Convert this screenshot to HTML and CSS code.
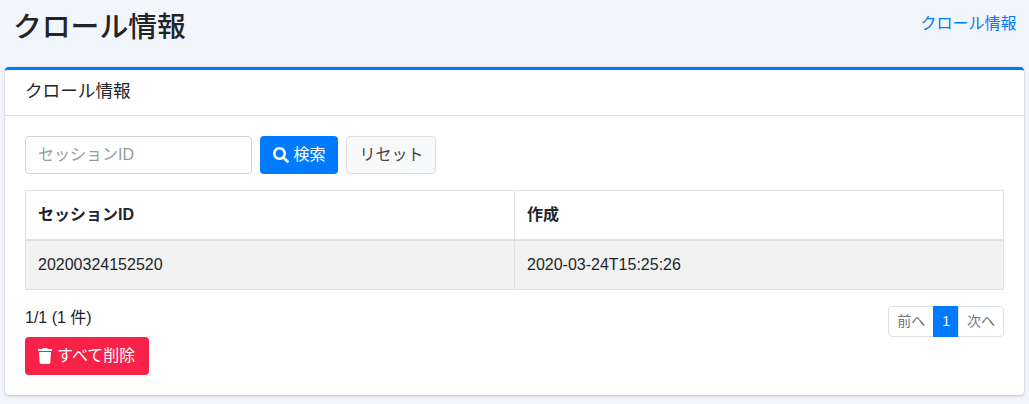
FILE: index.html
```html
<!DOCTYPE html>
<html lang="ja">
<head>
<meta charset="utf-8">
<title>クロール情報</title>
<link rel="stylesheet" href="styles.css">
</head>
<body>
<header class="page-head">
  <h1>クロール情報</h1>
  <a class="crumb" href="#">クロール情報</a>
</header>
<section class="card">
  <div class="card-header">クロール情報</div>
  <div class="card-body">
    <form class="search">
      <input class="input" type="text" placeholder="セッションID">
      <button class="btn btn-primary" type="button">
        <svg class="icon" viewBox="0 0 512 512" aria-hidden="true"><path fill="currentColor" d="M505 442.700L405.300 343c-4.500-4.500-10.600-7-17-7H372c27.600-35.300 44-79.700 44-128C416 93.100 322.900 0 208 0S0 93.100 0 208s93.100 208 208 208c48.300 0 92.700-16.400 128-44v16.300c0 6.400 2.500 12.500 7 17l99.700 99.700c9.400 9.400 24.600 9.400 33.900 0l28.300-28.300c9.400-9.400 9.400-24.600.1-34zM208 336c-70.700 0-128-57.200-128-128 0-70.700 57.200-128 128-128 70.700 0 128 57.200 128 128 0 70.700-57.200 128-128 128z"/></svg>
        検索
      </button>
      <button class="btn btn-light" type="button">リセット</button>
    </form>
    <table class="table">
      <thead>
        <tr><th>セッションID</th><th>作成</th></tr>
      </thead>
      <tbody>
        <tr><td>20200324152520</td><td>2020-03-24T15:25:26</td></tr>
      </tbody>
    </table>
    <div class="foot">
      <div class="foot-left">
        <div class="count">1/1 (1 件)</div>
        <button class="btn btn-danger" type="button">
          <svg class="icon trash" viewBox="0 0 448 512" aria-hidden="true"><path fill="currentColor" d="M432 32H312l-9.400-18.700A24 24 0 0 0 281.100 0H166.800a23.720 23.720 0 0 0-21.400 13.300L136 32H16A16 16 0 0 0 0 48v32a16 16 0 0 0 16 16h416a16 16 0 0 0 16-16V48a16 16 0 0 0-16-16zM53.200 467a48 48 0 0 0 47.900 45h245.800a48 48 0 0 0 47.900-45L416 128H32z"/></svg>
          すべて削除
        </button>
      </div>
      <nav class="pager">
        <a class="page" href="#">前へ</a>
        <a class="page active" href="#">1</a>
        <a class="page" href="#">次へ</a>
      </nav>
    </div>
  </div>
</section>
</body>
</html>
```

FILE: styles.css
```css
* { box-sizing: border-box; }
html, body { height: 100%; }
body {
  margin: 0;
  background: #f2f5f9;
  color: #212529;
  font-family: "Liberation Sans", "Noto Sans CJK JP", sans-serif;
  font-size: 16px;
  line-height: 1.5;
  overflow: hidden;
}
.page-head {
  display: flex;
  justify-content: space-between;
  align-items: flex-start;
  padding: 5px 12.5px 0 13px;
  height: 67px;
}
h1 {
  margin: 0;
  font-family: "Noto Sans CJK JP", sans-serif;
  font-size: 28.8px;
  font-weight: 500;
  line-height: 39px;
  color: #212529;
}
.crumb {
  color: #007bff;
  text-decoration: none;
  margin-top: 7px;
}
.card {
  margin: 0 5px;
  height: 328px;
  background: #fff;
  border-top: 3px solid #007bff;
  border-radius: 4px;
  box-shadow: 0 0 1px rgba(0,0,0,.125), 0 1px 3px rgba(0,0,0,.2);
}
.card-header {
  height: 46px;
  padding: 8px 20px 0;
  border-bottom: 1px solid rgba(0,0,0,.125);
  font-size: 17.6px;
  line-height: 26px;
}
.card-body { padding: 20px; }
.search {
  display: flex;
  gap: 8px;
  height: 38px;
  margin-bottom: 16px;
}
.input {
  width: 227px;
  height: 38px;
  padding: 6px 12px;
  border: 1px solid #ced4da;
  border-radius: 4px;
  font: inherit;
  color: #495057;
  background: #fff;
}
.input::placeholder { color: #939ba2; opacity: 1; }
.btn {
  display: inline-flex;
  align-items: center;
  height: 38px;
  padding: 0 12px;
  border: 1px solid transparent;
  border-radius: 4px;
  font: inherit;
  white-space: nowrap;
}
.btn-primary { background: #007bff; color: #fff; }
.btn-light { background: #f8f9fa; border-color: #ddd; color: #444; }
.btn-danger { width: 124px; background: #f82249; color: #fff; }
.icon { width: 16px; height: 16px; margin-right: 4.45px; flex: none; }
.trash { width: 14px; margin-right: 5px; }
.table {
  width: 979px;
  border-collapse: collapse;
  table-layout: fixed;
}
.table th, .table td {
  height: 49.5px;
  padding: 0 12px;
  border: 1px solid #dee2e6;
  text-align: left;
  vertical-align: middle;
}
.table th:first-child { width: 489px; }
.table thead th { border-bottom-width: 2px; font-weight: 700; }
.table tbody tr { background: #f2f2f2; }
.foot {
  display: flex;
  justify-content: space-between;
  align-items: flex-start;
  margin-top: 16px;
}
.count { height: 31px; }
.pager { display: flex; }
.page {
  display: block;
  height: 31px;
  padding: 0 8px;
  border: 1px solid #dee2e6;
  margin-left: -1px;
  font-size: 14px;
  line-height: 29px;
  color: #6c757d;
  background: #fff;
  text-decoration: none;
}
.page:first-child { border-radius: 4px 0 0 4px; margin-left: 0; }
.page:last-child { border-radius: 0 4px 4px 0; }
.page.active { background: #007bff; border-color: #007bff; color: #fff; }
```
